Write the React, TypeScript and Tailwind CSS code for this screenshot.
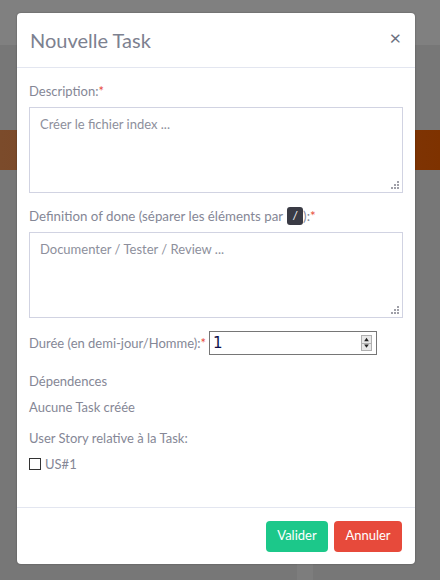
import React from "react";

const font = { fontFamily: "Lato, 'Noto Sans', sans-serif" };

function Grip() {
  return (
    <svg width="9" height="9" viewBox="0 0 9 9" className="absolute bottom-[3px] right-[3px]">
      {[
        [6, 0], [3, 3], [6, 3], [0, 6], [3, 6], [6, 6],
      ].map(([x, y]) => (
        <rect key={`${x}-${y}`} x={x} y={y} width="2" height="2" fill="#a0a0a8" />
      ))}
    </svg>
  );
}

function Area({ placeholder }: { placeholder: string }) {
  return (
    <div className="relative">
      <textarea
        placeholder={placeholder}
        className="block h-[86px] w-full resize-none border border-[#d1d3e2] px-[10px] py-[6px] text-[13px] text-[#6e707e] outline-none placeholder:text-[#8d8f9c]"
        style={font}
      />
      <Grip />
    </div>
  );
}

function Req() {
  return <span className="text-[#e74a3b]">*</span>;
}

export default function App() {
  return (
    <div className="relative h-[580px] w-[440px] overflow-hidden bg-[#777777]" style={font}>
      {/* page behind the overlay */}
      <div className="h-[45px] bg-[#808080]" />
      <div className="h-[85px]" />
      <div className="h-[40px] bg-gradient-to-r from-[#7b4b2b] to-[#7e3200]" />
      <div className="ml-[297px] mt-[390px] h-[30px] w-[16px] bg-[#7d7d7d]" />

      {/* modal */}
      <div className="absolute left-[17px] top-[13px] flex h-[551px] w-[398px] flex-col rounded-[4px] bg-white shadow-[0_0_2px_rgba(0,0,0,0.35)]">
        <div className="flex h-[55px] items-center justify-between border-b border-[#e3e6f0] px-[13px]">
          <h5 className="text-[20px] text-[#7d8190]">Nouvelle Task</h5>
          <button className="mr-[1px] -mt-[6px] text-[20px] leading-none text-[#6b7080]">×</button>
        </div>

        <div className="flex flex-1 flex-col px-[12px] pt-[13px] text-[13px] leading-[20px] text-[#858796]">
          <div className="mb-[6px]">
            Description:<Req />
          </div>
          <Area placeholder="Créer le fichier index ..." />

          <div className="mb-[6px] mt-[13px] flex items-center text-[13.3px]">
            Definition of done (séparer les éléments par
            <span className="ml-[4px] flex h-[18px] w-[16px] items-center justify-center rounded-[3px] bg-[#3a3b45] text-[12px] text-white">
              /
            </span>
            ):<Req />
          </div>
          <Area placeholder="Documenter / Tester / Review ..." />

          <div className="mt-[13px] flex items-center">
            <span>
              Durée (en demi-jour/Homme):<Req />
            </span>
            <div className="ml-[3px] flex h-[24px] w-[168px] items-center border border-[#767676] bg-white pl-[3px] pr-[4px]">
              <input
                defaultValue="1"
                className="min-w-0 flex-1 text-[15px] text-[#10104a] outline-none"
                style={{ fontFamily: "'DejaVu Sans', sans-serif" }}
              />
              <div className="flex h-[16px] w-[11px] flex-col border border-[#b0b0b0] bg-[#e8e8e8]">
                <svg viewBox="0 0 9 7" className="h-[7px] w-[9px]">
                  <path d="M2 5.5 L4.5 2 L7 5.5 Z" fill="#222" />
                </svg>
                <div className="h-px bg-[#b0b0b0]" />
                <svg viewBox="0 0 9 7" className="h-[7px] w-[9px]">
                  <path d="M2 1.5 L4.5 5 L7 1.5 Z" fill="#222" />
                </svg>
              </div>
            </div>
          </div>

          <div className="mt-[16px]">Dépendences</div>
          <div className="mt-[6px]">Aucune Task créée</div>
          <div className="mt-[11px]">User Story relative à la Task:</div>
          <label className="mt-[6px] flex items-center">
            <span className="h-[12px] w-[12px] border border-[#333] bg-white" />
            <span className="ml-[4px]">US#1</span>
          </label>
        </div>

        <div className="flex h-[57px] items-center justify-end gap-[6px] border-t border-[#e3e6f0] px-[13px]">
          <button className="h-[31px] w-[62px] rounded-[4px] bg-[#1cc88a] text-[13px] text-white">Valider</button>
          <button className="h-[31px] w-[68px] rounded-[4px] bg-[#e74a3b] text-[13px] text-white">Annuler</button>
        </div>
      </div>
    </div>
  );
}
